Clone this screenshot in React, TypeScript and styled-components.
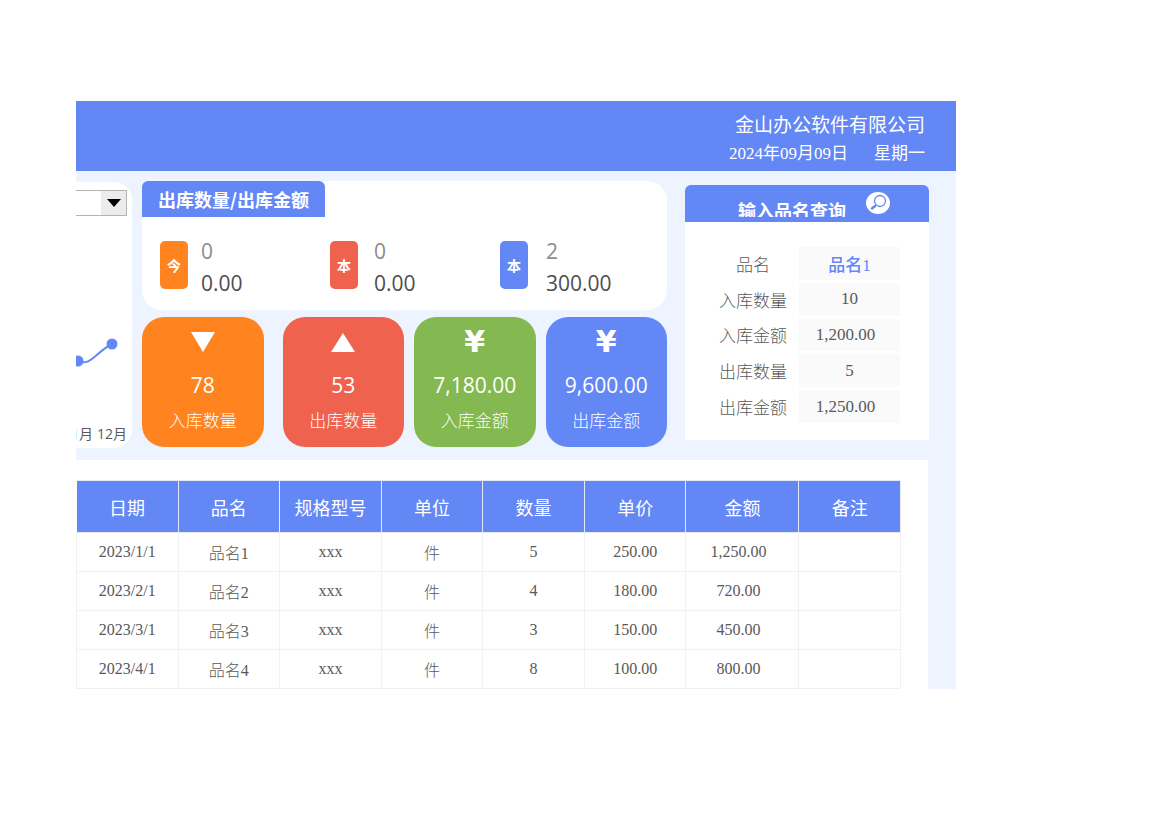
import React from "react";
import styled, { createGlobalStyle } from "styled-components";

const blue = "#6387f5";
const orange = "#ff841f";
const red = "#ef624d";
const green = "#84b850";
const pale = "#edf4ff";
const song = `"Liberation Serif", "Noto Sans CJK SC", serif`;
const hei = `"Noto Sans CJK SC", sans-serif`;
const digits = `"Open Sans", "Noto Sans CJK SC", sans-serif`;

const GlobalStyle = createGlobalStyle`
  * { box-sizing: border-box; }
  body { margin: 0; background: #fff; font-family: ${hei}; color: #595959; }
  h2 { margin: 0; }
`;

const Sheet = styled.main`
  margin: 101px 214px 0 76px;
  background: ${pale};
`;

const Banner = styled.header`
  display: flex;
  flex-direction: column;
  align-items: flex-end;
  padding: 11px 31px 3px;
  background: ${blue};
  color: #fff;
  line-height: 28px;
  font-family: ${song};
`;

const Company = styled.div`
  font-size: 19px;
`;

const Today = styled.div`
  display: flex;
  gap: 26px;
  font-size: 17px;
`;

const Dashboard = styled.div`
  display: grid;
  grid-template-columns: 56px minmax(0, 1fr) 244px;
  padding: 10px 27px 12px 0;
`;

const TrendPanel = styled.section`
  display: flex;
  flex-direction: column;
  justify-content: space-between;
  margin-top: 1px;
  padding-top: 8px;
  background: #fff;
  border-radius: 0 18px 18px 0;
  overflow: hidden;
`;

const Picker = styled.div`
  position: relative;
  margin-right: 5px;
`;

const PickerSelect = styled.select`
  display: block;
  width: 100%;
  height: 26px;
  appearance: none;
  border: 1px solid #b4b4b4;
  border-left: 0;
  border-radius: 0;
  background: linear-gradient(to right, #fff 25px, #ececec 25px);
`;

const PickerArrow = styled.svg`
  position: absolute;
  top: 9px;
  right: 6px;
  pointer-events: none;
`;

const TrendLine = styled.svg`
  display: block;
  margin-top: 70px;
`;

const Months = styled.div`
  display: flex;
  justify-content: flex-end;
  gap: 4px;
  padding: 0 5px 4px 0;
  font-family: ${digits};
  font-size: 14px;
  line-height: 20px;
  white-space: nowrap;
`;

const Middle = styled.div`
  display: flex;
  flex-direction: column;
  gap: 7px;
  margin: 0 18px 0 10px;
`;

const Outbound = styled.section`
  padding-bottom: 11px;
  background: #fff;
  border-radius: 6px 20px 20px 20px;
`;

const Tab = styled.h2`
  width: fit-content;
  padding: 0 16px;
  background: ${blue};
  border-radius: 6px 6px 0 0;
  color: #fff;
  font-size: 18px;
  font-weight: 700;
  line-height: 36px;
`;

const Periods = styled.div`
  display: grid;
  grid-template-columns: repeat(3, 1fr);
  padding: 18px 0 0 18px;
  margin-right: -3px;
`;

const Period = styled.div<{ $gap: number }>`
  display: flex;
  gap: ${(p) => p.$gap}px;
`;

const Badge = styled.div<{ $color: string }>`
  width: 28px;
  height: 48px;
  margin-top: 6px;
  border-radius: 5px;
  background: ${(p) => p.$color};
  color: #fff;
  font-size: 14px;
  font-weight: 700;
  line-height: 48px;
  text-align: center;
`;

const Figures = styled.div`
  font-family: ${digits};
  font-size: 21px;
  line-height: 32px;
  color: #4d4d4d;
`;

const Count = styled.div`
  color: #8c8c8c;
`;

const Totals = styled.div`
  display: flex;
  gap: 10px;
`;

const TotalCard = styled.section<{ $color: string }>`
  display: flex;
  flex: 1 1 0;
  flex-direction: column;
  align-items: center;
  padding-bottom: 10px;
  border-radius: 22px;
  background: ${(p) => p.$color};
  color: #fff;
  font-size: 17px;
  line-height: 34px;

  &:first-child {
    margin-right: 9px;
  }
`;

const Mark = styled.div`
  display: flex;
  align-items: center;
  height: 50px;
  font-family: "DejaVu Sans", sans-serif;
  font-size: 30px;
  font-weight: 700;
`;

const TotalValue = styled.div`
  font-family: ${digits};
  font-size: 21px;
  line-height: 36px;
`;

const TotalLabel = styled.div`
  font-weight: 300;
`;

const Query = styled.section`
  margin: 4px 0 8px;
  background: #fff;
  border-radius: 6px 6px 0 0;
`;

const QueryHead = styled.div`
  display: flex;
  align-items: flex-end;
  justify-content: space-between;
  padding: 6px 39px 5px 53px;
  background: ${blue};
  border-radius: 6px 6px 0 0;
`;

const QueryTitle = styled.h2`
  height: 16px;
  overflow: hidden;
  color: #fff;
  font-size: 18px;
  font-weight: 700;
  line-height: 18px;
`;

const SearchButton = styled.button`
  display: block;
  height: 24px;
  margin-bottom: 2px;
  padding: 0;
  border: 0;
  background: none;
  cursor: pointer;
`;

const QueryRows = styled.div`
  display: grid;
  grid-template-rows: repeat(5, 1fr);
  row-gap: 3px;
  height: 176px;
  margin: 25px 29px 17px 22px;
  font-family: ${song};
  font-size: 17px;
`;

const QueryRow = styled.div`
  display: grid;
  grid-template-columns: 92px minmax(0, 1fr);
  align-items: center;
  text-align: center;
`;

const QueryLabel = styled.label`
  font-weight: 300;
`;

const QueryInput = styled.input`
  width: 100%;
  height: 100%;
  padding: 0;
  border: 0;
  background: #fafafa;
  color: ${blue};
  font: 500 17px ${song};
  text-align: center;
`;

const QueryOutput = styled.output<{ $amount: boolean }>`
  display: grid;
  place-items: center;
  height: 100%;
  padding-right: ${(p) => (p.$amount ? 8 : 0)}px;
  background: #fafafa;
`;

const Ledger = styled.section`
  padding: 20px 27px 0 0;
  margin-right: 28px;
  background: #fff;
`;

const LedgerTable = styled.table`
  width: 100%;
  table-layout: fixed;
  border-collapse: collapse;
  font-family: ${song};
  font-size: 16px;
  text-align: center;
`;

const HeadCell = styled.th<{ $wide: boolean }>`
  width: ${(p) => (p.$wide ? "13.7%" : "auto")};
  height: 52px;
  padding: 0;
  border: 1px solid #e4eafa;
  background: ${blue};
  color: #fff;
  font-size: 18px;
  font-weight: 400;

  &:first-child {
    border-left: 0;
  }
`;

const Cell = styled.td<{ $amount: boolean }>`
  height: 39px;
  padding: 0 ${(p) => (p.$amount ? 8 : 0)}px 0 0;
  border: 1px solid #f1f1f1;
  font-weight: 300;
`;

const periods = [
  { name: "今", color: orange, gap: 13, count: "0", amount: "0.00" },
  { name: "本", color: red, gap: 16, count: "0", amount: "0.00" },
  { name: "本", color: blue, gap: 18, count: "2", amount: "300.00" },
];

const Down = () => (
  <svg width="24" height="20" viewBox="0 0 24 20" aria-hidden="true">
    <path d="M0 0H24L12 20Z" fill="#fff" />
  </svg>
);

const Up = () => (
  <svg width="24" height="20" viewBox="0 0 24 20" aria-hidden="true">
    <path d="M0 20H24L12 1Z" fill="#fff" />
  </svg>
);

const totals = [
  { mark: <Down />, value: "78", label: "入库数量", color: orange },
  { mark: <Up />, value: "53", label: "出库数量", color: red },
  { mark: "¥", value: "7,180.00", label: "入库金额", color: green },
  { mark: "¥", value: "9,600.00", label: "出库金额", color: blue },
];

const results = [
  { label: "入库数量", value: "10", amount: false },
  { label: "入库金额", value: "1,200.00", amount: true },
  { label: "出库数量", value: "5", amount: false },
  { label: "出库金额", value: "1,250.00", amount: true },
];

const columns = ["日期", "品名", "规格型号", "单位", "数量", "单价", "金额", "备注"];

const records = [
  ["2023/1/1", "品名1", "xxx", "件", "5", "250.00", "1,250.00", ""],
  ["2023/2/1", "品名2", "xxx", "件", "4", "180.00", "720.00", ""],
  ["2023/3/1", "品名3", "xxx", "件", "3", "150.00", "450.00", ""],
  ["2023/4/1", "品名4", "xxx", "件", "8", "100.00", "800.00", ""],
];

export default function App() {
  return (
    <>
      <GlobalStyle />
      <Sheet>
        <Banner>
          <Company>金山办公软件有限公司</Company>
          <Today>
            <span>2024年09月09日</span>
            <span>星期一</span>
          </Today>
        </Banner>

        <Dashboard>
          <TrendPanel>
            <Picker>
              <PickerSelect aria-label="年份">
                <option></option>
              </PickerSelect>
              <PickerArrow width="14" height="8" viewBox="0 0 14 8" aria-hidden="true">
                <path d="M0 0H14L7 8Z" fill="#000" />
              </PickerArrow>
            </Picker>
            <TrendLine width="56" height="40" viewBox="0 0 56 40" aria-hidden="true">
              <path d="M2 26C14 32 20 17 36 9" fill="none" stroke={blue} strokeWidth="2" />
              <circle cx="2" cy="26" r="5.5" fill={blue} />
              <circle cx="36" cy="9" r="5.5" fill={blue} />
            </TrendLine>
            <Months>
              <span>11月</span>
              <span>12月</span>
            </Months>
          </TrendPanel>

          <Middle>
            <Outbound>
              <Tab>出库数量/出库金额</Tab>
              <Periods>
                {periods.map((p, i) => (
                  <Period key={i} $gap={p.gap}>
                    <Badge $color={p.color}>{p.name}</Badge>
                    <Figures>
                      <Count>{p.count}</Count>
                      <div>{p.amount}</div>
                    </Figures>
                  </Period>
                ))}
              </Periods>
            </Outbound>
            <Totals>
              {totals.map((t) => (
                <TotalCard key={t.label} $color={t.color}>
                  <Mark>{t.mark}</Mark>
                  <TotalValue>{t.value}</TotalValue>
                  <TotalLabel>{t.label}</TotalLabel>
                </TotalCard>
              ))}
            </Totals>
          </Middle>

          <Query>
            <QueryHead>
              <QueryTitle>输入品名查询</QueryTitle>
              <SearchButton aria-label="查询">
                <svg width="24" height="24" viewBox="0 0 24 24" fill="none" aria-hidden="true">
                  <ellipse cx="12" cy="12" rx="12" ry="11" fill="#fff" />
                  <circle cx="14" cy="10" r="5.5" stroke={blue} strokeWidth="1.3" />
                  <path d="M10 14L8.5 15.5" stroke={blue} strokeWidth="1.2" />
                  <path d="M8.8 15.2L6 17.5" stroke={blue} strokeWidth="2.4" strokeLinecap="round" />
                </svg>
              </SearchButton>
            </QueryHead>
            <QueryRows>
              <QueryRow>
                <QueryLabel htmlFor="item">品名</QueryLabel>
                <QueryInput id="item" defaultValue="品名1" />
              </QueryRow>
              {results.map((r, i) => (
                <QueryRow key={r.label}>
                  <QueryLabel htmlFor={`result-${i}`}>{r.label}</QueryLabel>
                  <QueryOutput id={`result-${i}`} $amount={r.amount}>
                    {r.value}
                  </QueryOutput>
                </QueryRow>
              ))}
            </QueryRows>
          </Query>
        </Dashboard>

        <Ledger>
          <LedgerTable>
            <thead>
              <tr>
                {columns.map((c) => (
                  <HeadCell key={c} scope="col" $wide={c === "金额"}>
                    {c}
                  </HeadCell>
                ))}
              </tr>
            </thead>
            <tbody>
              {records.map((row) => (
                <tr key={row[0]}>
                  {row.map((value, i) => (
                    <Cell key={i} $amount={i === 6}>
                      {value}
                    </Cell>
                  ))}
                </tr>
              ))}
            </tbody>
          </LedgerTable>
        </Ledger>
      </Sheet>
    </>
  );
}
